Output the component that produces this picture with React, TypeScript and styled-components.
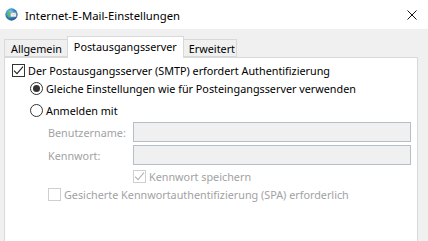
import styled, { createGlobalStyle } from "styled-components";

const GlobalStyle = createGlobalStyle`
  html, body {
    margin: 0;
    padding: 0;
    background: #f0f0f0;
  }
  body {
    font-family: "Noto Sans", "Open Sans", sans-serif;
  }
`;

const Window = styled.div`
  width: 428px;
  height: 241px;
  background: #f0f0f0;
  display: flex;
  flex-direction: column;
  overflow: hidden;
  color: #000;
`;

const TitleBar = styled.div`
  height: 29px;
  flex: none;
  background: #fff;
  display: flex;
  align-items: center;
  padding-left: 5px;
`;

const Title = styled.span`
  margin-left: 7px;
  font-size: 11.3px;
  color: #000;
  flex: 1;
  padding-top: 1px;
`;

const CloseButton = styled.div`
  width: 32px;
  height: 29px;
  display: flex;
  align-items: center;
  justify-content: center;
`;

const TabStrip = styled.div`
  display: flex;
  align-items: flex-end;
  height: 28px;
  flex: none;
  padding-left: 4px;
  position: relative;
  z-index: 1;
`;

const Tab = styled.div<{ $active?: boolean }>`
  box-sizing: border-box;
  height: ${({ $active }) => ($active ? 22 : 18)}px;
  margin: 0 ${({ $active }) => ($active ? -2 : 0)}px
    ${({ $active }) => ($active ? -1 : 0)}px;
  padding: 0 6px ${({ $active }) => ($active ? 2 : 0)}px;
  border: 1px solid #d9d9d9;
  border-bottom: ${({ $active }) => ($active ? "none" : "1px solid #d9d9d9")};
  background: ${({ $active }) => ($active ? "#fff" : "#f0f0f0")};
  position: relative;
  z-index: ${({ $active }) => ($active ? 2 : 1)};
  font-size: 10.8px;
  display: flex;
  align-items: center;
  & + & {
    border-left: ${({ $active }) => ($active ? "1px solid #d9d9d9" : "none")};
  }
  &:last-child {
    padding-right: 1px;
  }
`;

const Panel = styled.div`
  flex: 1;
  margin: 0 10px 0 4px;
  background: #fff;
  border: 1px solid #d9d9d9;
  border-bottom: none;
  padding: 5px 0 0 7px;
  display: flex;
  flex-direction: column;
`;

const Row = styled.div<{ $indent: number; $top: number; $disabled?: boolean }>`
  display: flex;
  align-items: center;
  gap: 3px;
  height: 14px;
  margin-left: ${({ $indent }) => $indent}px;
  margin-top: ${({ $top }) => $top}px;
  font-size: 10.8px;
  white-space: nowrap;
  color: ${({ $disabled }) => ($disabled ? "#a2a2a2" : "#000")};
`;

const Box = styled.span<{ $disabled?: boolean }>`
  width: 13px;
  height: 13px;
  box-sizing: border-box;
  border: 1px solid ${({ $disabled }) => ($disabled ? "#cfcfcf" : "#333")};
  background: #fff;
  display: flex;
  align-items: center;
  justify-content: center;
  flex: none;
`;

const Radio = styled.span`
  width: 13px;
  height: 13px;
  box-sizing: border-box;
  border: 1px solid #333;
  border-radius: 50%;
  background: #fff;
  display: flex;
  align-items: center;
  justify-content: center;
  flex: none;
`;

const Dot = styled.span`
  width: 7px;
  height: 7px;
  border-radius: 50%;
  background: #333;
`;

const FieldRow = styled.div<{ $top: number }>`
  display: flex;
  align-items: center;
  margin: ${({ $top }) => $top}px 6px 0 36px;
`;

const FieldLabel = styled.span`
  width: 85px;
  font-size: 10.8px;
  color: #a2a2a2;
`;

const Input = styled.div`
  flex: 1;
  height: 20px;
  box-sizing: border-box;
  border: 1px solid #b4bfcb;
  background: #f0f0f0;
`;

const Check = ({ color }: { color: string }) => (
  <svg width="11" height="11" viewBox="0 0 11 11">
    <path d="M1 5.6 L4 8.6 L10 1.6" fill="none" stroke={color} strokeWidth="1.1" />
  </svg>
);

const MailGlobe = () => (
  <svg width="13" height="13" viewBox="0 0 14 14">
    <defs>
      <radialGradient id="globe" cx="40%" cy="35%" r="70%">
        <stop offset="0%" stopColor="#9edcf2" />
        <stop offset="55%" stopColor="#2f86c4" />
        <stop offset="100%" stopColor="#1a4f86" />
      </radialGradient>
    </defs>
    <circle cx="7" cy="7" r="6.6" fill="url(#globe)" />
    <path d="M2.6 4 Q5 2.6 6 5 Q5 7 6.4 9.2 Q5 11.4 3.4 9.4 Q2.2 6.4 2.6 4Z" fill="#5cb85c" opacity="0.85" />
    <rect x="6" y="5" width="6" height="4.6" fill="#f6f6f6" stroke="#8a99a8" strokeWidth="0.5" />
    <path d="M6 5 L9 7.6 L12 5" fill="none" stroke="#8a99a8" strokeWidth="0.5" />
  </svg>
);

const CloseIcon = () => (
  <svg width="10" height="10" viewBox="0 0 10 10">
    <path d="M0.5 0.5 L9.5 9.5 M9.5 0.5 L0.5 9.5" stroke="#111" strokeWidth="1" />
  </svg>
);

export default function App() {
  return (
    <>
      <GlobalStyle />
      <Window>
        <TitleBar>
          <MailGlobe />
          <Title>Internet-E-Mail-Einstellungen</Title>
          <CloseButton>
            <CloseIcon />
          </CloseButton>
        </TitleBar>
        <TabStrip>
          <Tab>Allgemein</Tab>
          <Tab $active>Postausgangsserver</Tab>
          <Tab>Erweitert</Tab>
        </TabStrip>
        <Panel>
          <Row $indent={0} $top={0}>
            <Box>
              <Check color="#222" />
            </Box>
            Der Postausgangsserver (SMTP) erfordert Authentifizierung
          </Row>
          <Row $indent={18} $top={4}>
            <Radio>
              <Dot />
            </Radio>
            Gleiche Einstellungen wie für Posteingangsserver verwenden
          </Row>
          <Row $indent={18} $top={8}>
            <Radio />
            Anmelden mit
          </Row>
          <FieldRow $top={5}>
            <FieldLabel>Benutzername:</FieldLabel>
            <Input />
          </FieldRow>
          <FieldRow $top={3}>
            <FieldLabel>Kennwort:</FieldLabel>
            <Input />
          </FieldRow>
          <Row $indent={121} $top={4} $disabled>
            <Box $disabled>
              <Check color="#b4b4b4" />
            </Box>
            Kennwort speichern
          </Row>
          <Row $indent={36} $top={4} $disabled>
            <Box $disabled />
            Gesicherte Kennwortauthentifizierung (SPA) erforderlich
          </Row>
        </Panel>
      </Window>
    </>
  );
}
